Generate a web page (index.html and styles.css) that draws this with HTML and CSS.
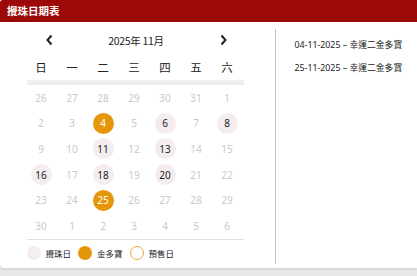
FILE: index.html
```html
<!DOCTYPE html>
<html lang="zh-Hant">
<head>
<meta charset="utf-8">
<link rel="stylesheet" href="styles.css">
</head>
<body>
<div class="card">
  <div class="header">攪珠日期表</div>
  <div class="content">
    <div class="cal">
      <div class="nav">
        <span class="arrow"><svg width="9" height="12" viewBox="0 0 9 12"><path d="M6.5 1.5 L2.5 6 L6.5 10.5" fill="none" stroke="#222" stroke-width="2"/></svg></span>
        <span class="title">2025年 11月</span>
        <span class="arrow"><svg width="9" height="12" viewBox="0 0 9 12"><path d="M2.5 1.5 L6.5 6 L2.5 10.5" fill="none" stroke="#222" stroke-width="2"/></svg></span>
      </div>
      <div class="weekdays">
        <span>日</span><span>一</span><span>二</span><span>三</span><span>四</span><span>五</span><span>六</span>
      </div>
      <div class="bar"></div>
      <div class="days">
        <span class="d muted">26</span><span class="d muted">27</span><span class="d muted">28</span><span class="d muted">29</span><span class="d muted">30</span><span class="d muted">31</span><span class="d muted">1</span>
        <span class="d muted">2</span><span class="d muted">3</span><span class="d"><i class="c gold">4</i></span><span class="d muted">5</span><span class="d"><i class="c pink">6</i></span><span class="d muted">7</span><span class="d"><i class="c pink">8</i></span>
        <span class="d muted">9</span><span class="d muted">10</span><span class="d"><i class="c pink">11</i></span><span class="d muted">12</span><span class="d"><i class="c pink">13</i></span><span class="d muted">14</span><span class="d muted">15</span>
        <span class="d"><i class="c pink">16</i></span><span class="d muted">17</span><span class="d"><i class="c pink">18</i></span><span class="d muted">19</span><span class="d"><i class="c pink">20</i></span><span class="d muted">21</span><span class="d muted">22</span>
        <span class="d muted">23</span><span class="d muted">24</span><span class="d"><i class="c gold">25</i></span><span class="d muted">26</span><span class="d muted">27</span><span class="d muted">28</span><span class="d muted">29</span>
        <span class="d muted">30</span><span class="d muted">1</span><span class="d muted">2</span><span class="d muted">3</span><span class="d muted">4</span><span class="d muted">5</span><span class="d muted">6</span>
      </div>
      <div class="legend">
        <span class="dot dot-pink"></span><span class="lbl">攪珠日</span>
        <span class="dot dot-gold"></span><span class="lbl">金多寶</span>
        <span class="dot dot-ring"></span><span class="lbl">預售日</span>
      </div>
    </div>
    <div class="list">
      <div class="item">04-11-2025 – 幸運二金多寶</div>
      <div class="item">25-11-2025 – 幸運二金多寶</div>
    </div>
  </div>
</div>
</body>
</html>
```

FILE: styles.css
```css
html, body {
  margin: 0;
  padding: 0;
}
body {
  background: #e8e8e8;
  width: 417px;
  height: 276px;
  overflow: hidden;
  font-family: "Noto Sans", "Noto Sans CJK TC", sans-serif;
  color: #222;
}
.card {
  background: #fff;
  height: 268px;
  border-radius: 3px 0 0 4px;
  box-shadow: 0 1px 3px rgba(0,0,0,0.12);
  overflow: hidden;
}
.header {
  background: #9d0909;
  color: #fff;
  height: 22px;
  line-height: 22px;
  padding-left: 7px;
  font-size: 10.5px;
  font-weight: bold;
  font-family: "Noto Sans CJK TC", sans-serif;
}
.content {
  display: flex;
  align-items: flex-start;
  padding-top: 7px;
}
.cal {
  width: 218px;
  padding-left: 26px;
  padding-right: 31px;
  border-right: 1.5px solid #c4c4c4;
  height: 235px;
  margin-left: -0.5px;
}
.nav {
  display: flex;
  align-items: center;
  justify-content: space-between;
  height: 22px;
  padding: 0 16px 0 19px;
}
.arrow {
  display: flex;
  width: 9px;
}
.title {
  font-size: 10.5px;
  font-family: "Noto Sans CJK TC", sans-serif;
  letter-spacing: -0.3px;
}
.weekdays {
  display: grid;
  grid-template-columns: repeat(7, 31px);
  margin-top: 3px;
  height: 26px;
  align-items: center;
}
.weekdays span {
  text-align: center;
  font-size: 11.5px;
  font-family: "Noto Sans CJK TC", sans-serif;
}
.bar {
  height: 5px;
  background: linear-gradient(#f2f2f2, #e9e9e9);
  margin-left: 1px;
}
.days {
  display: grid;
  grid-template-columns: repeat(7, 31px);
  grid-auto-rows: 25.6px;
}
.d {
  display: flex;
  align-items: center;
  justify-content: center;
  font-size: 10px;
  color: #222;
}
.d.muted {
  color: #c9c9c9;
}
.c {
  font-style: normal;
  width: 21px;
  height: 21px;
  border-radius: 50%;
  display: flex;
  align-items: center;
  justify-content: center;
}
.c.pink {
  background: #f5eced;
  color: #222;
}
.c.gold {
  background: #e6960b;
  color: #fff;
}
.legend {
  border-top: 1px solid #e0e0e0;
  display: flex;
  align-items: center;
  height: 26px;
  margin-left: 1px;
}
.dot {
  width: 14px;
  height: 14px;
  border-radius: 50%;
  box-sizing: border-box;
}
.dot-pink { background: #f5eced; }
.dot-gold { background: #e6960b; }
.dot-ring { border: 1.5px solid #eea543; }
.lbl {
  font-size: 8.5px;
  font-family: "Noto Sans CJK TC", sans-serif;
  margin-left: 5px;
  margin-right: 7px;
  color: #222;
}
.list {
  padding-left: 19px;
  padding-top: 10px;
}
.item {
  font-size: 8.8px;
  line-height: 12px;
  margin-bottom: 11px;
  color: #222;
  font-family: "Noto Sans", "Noto Sans CJK TC", sans-serif;
}
```
